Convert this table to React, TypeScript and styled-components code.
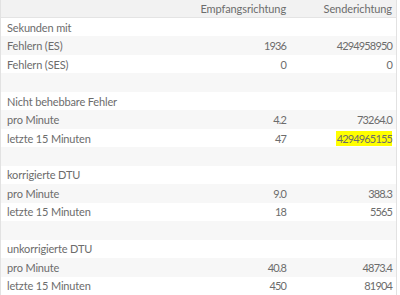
import React from "react";
import styled, { createGlobalStyle } from "styled-components";

const Global = createGlobalStyle`
  html, body { margin: 0; padding: 0; background: #ffffff; }
  body { font-family: "Lato", "Open Sans", sans-serif; }
`;

const Table = styled.div`
  width: 397px;
  box-sizing: border-box;
  border-left: 1px solid #e2e2e2;
  border-right: 1px solid #e2e2e2;
  border-bottom: 1px solid #e2e2e2;
  font-size: 11px;
  color: #6c6c6c;
`;

const Row = styled.div<{ $variant: "head" | "odd" | "even" }>`
  display: grid;
  grid-template-columns: 1fr 110px 106px;
  align-items: center;
  box-sizing: border-box;
  height: ${(p) => (p.$variant === "head" ? "18px" : "18.47px")};
  background: ${(p) =>
    p.$variant === "head" ? "#f2f2f2" : p.$variant === "even" ? "#f7f7f7" : "#ffffff"};
  border-bottom: ${(p) => (p.$variant === "head" ? "1px solid #e4e4e4" : "none")};
`;

const Label = styled.div`
  padding-left: 6px;
  white-space: nowrap;
  letter-spacing: -0.15px;
`;

const HeadCell = styled.div`
  text-align: right;
  padding-right: 4px;
  white-space: nowrap;
  letter-spacing: -0.1px;
`;

const Num = styled.div`
  text-align: right;
  padding-right: 4px;
  white-space: nowrap;
  letter-spacing: -0.85px;
`;

const Mark = styled.span`
  background: #ffff00;
  padding: 1px 0 1px 1px;
`;

type R = [string, string, string, boolean?];

const rows: R[] = [
  ["Sekunden mit", "", ""],
  ["Fehlern (ES)", "1936", "4294958950"],
  ["Fehlern (SES)", "0", "0"],
  ["", "", ""],
  ["Nicht behebbare Fehler", "", ""],
  ["pro Minute", "4.2", "73264.0"],
  ["letzte 15 Minuten", "47", "4294965155", true],
  ["", "", ""],
  ["korrigierte DTU", "", ""],
  ["pro Minute", "9.0", "388.3"],
  ["letzte 15 Minuten", "18", "5565"],
  ["", "", ""],
  ["unkorrigierte DTU", "", ""],
  ["pro Minute", "40.8", "4873.4"],
  ["letzte 15 Minuten", "450", "81904"],
];

export default function App() {
  return (
    <>
      <Global />
      <Table>
        <Row $variant="head">
          <Label />
          <HeadCell>Empfangsrichtung</HeadCell>
          <HeadCell>Senderichtung</HeadCell>
        </Row>
        {rows.map((r, i) => (
          <Row key={i} $variant={i % 2 === 0 ? "odd" : "even"}>
            <Label>{r[0]}</Label>
            <Num>{r[1]}</Num>
            <Num>{r[3] ? <Mark>{r[2]}</Mark> : r[2]}</Num>
          </Row>
        ))}
      </Table>
    </>
  );
}
